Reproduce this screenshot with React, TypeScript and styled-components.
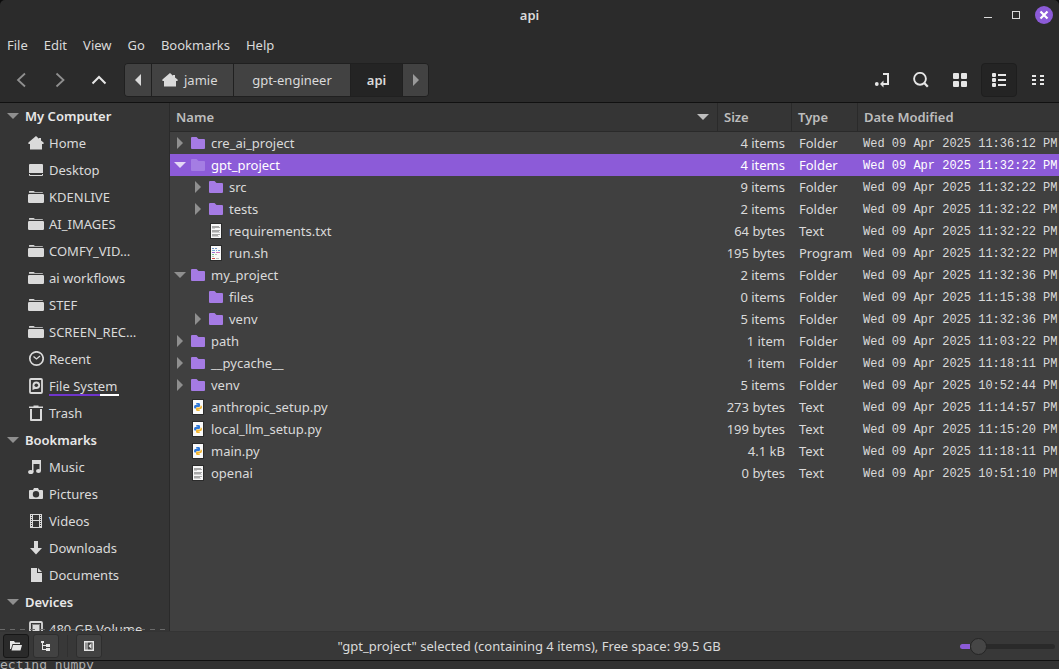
import React from "react";
import styled, { createGlobalStyle, css } from "styled-components";

const c = {
  chrome: "#2b2b2b",
  panel: "#353535",
  list: "#404040",
  edge: "#111111",
  line: "#2a2a2a",
  text: "#dadada",
  icon: "#e6e6e6",
  dim: "#8f8f8f",
  accent: "#8c5bd8",
  folder: "#a57be4",
};

const GlobalStyle = createGlobalStyle`
  *, *::before, *::after { box-sizing: border-box; }
  body {
    margin: 0;
    background: #0c0c0c;
    color: ${c.text};
    font: 13px/18px "Noto Sans", "Open Sans", sans-serif;
  }
  button { font: inherit; color: inherit; background: none; border: 0; padding: 0; margin: 0; }
  a { color: inherit; text-decoration: none; }
  svg { display: block; flex: none; }
`;

const Screen = styled.div`
  display: flex;
  flex-direction: column;
  height: 100vh;
  overflow: hidden;
`;

const Window = styled.div`
  flex: 1;
  min-height: 0;
  display: flex;
  flex-direction: column;
  border-radius: 5px 5px 0 0;
  overflow: hidden;
  border-bottom: 1px solid ${c.edge};
  background: ${c.chrome};
`;

const TitleBar = styled.header`
  display: grid;
  grid-template-columns: 1fr auto 1fr;
  align-items: center;
  height: 30px;
  padding: 0 1px;
`;

const Title = styled.h1`
  grid-column: 2;
  margin: 0;
  font-size: 13px;
  font-weight: 600;
`;

const WindowButtons = styled.div`
  display: flex;
  justify-content: flex-end;
`;

const WindowButton = styled.button`
  display: grid;
  place-items: center;
  width: 28px;
  height: 30px;
`;

const MenuBar = styled.nav`
  display: flex;
  gap: 16px;
  padding: 0 7px;
  height: 30px;
  align-items: center;
`;

const MenuItem = styled.button`
  height: 24px;
`;

const Toolbar = styled.div`
  display: flex;
  align-items: center;
  gap: 3px;
  height: 43px;
  padding: 2px 3px 4px;
  border-bottom: 1px solid ${c.edge};
`;

const ToolButton = styled.button<{ $active?: boolean; $dim?: boolean }>`
  display: grid;
  place-items: center;
  width: 36px;
  height: 34px;
  border-radius: 4px;
  border: 1px solid transparent;
  color: ${(p) => (p.$dim ? c.dim : c.icon)};
  ${(p) =>
    p.$active &&
    css`
      background: #242424;
      border-color: #1e1e1e;
    `}
`;

const PathBar = styled.div`
  display: flex;
  margin: 0 auto 0 4px;
  height: 34px;
  border: 1px solid #202020;
  border-radius: 4px;
  overflow: hidden;
`;

const PathButton = styled.button<{ $width: number; $current?: boolean; $dim?: boolean }>`
  display: flex;
  align-items: center;
  justify-content: center;
  gap: 6px;
  min-width: ${(p) => p.$width}px;
  background: ${(p) => (p.$current ? "#242424" : "#424242")};
  color: ${(p) => (p.$dim ? "#9a9a9a" : c.text)};
  font-weight: ${(p) => (p.$current ? 600 : 400)};
  & + & { border-left: 1px solid #202020; }
`;

const HomeButton = styled(PathButton)`
  justify-content: flex-start;
  padding-left: 10px;
`;

const Main = styled.div`
  flex: 1;
  min-height: 0;
  display: flex;
`;

const Sidebar = styled.nav`
  width: 170px;
  flex: none;
  position: relative;
  overflow: hidden;
  background: ${c.panel};
  border-right: 1px solid ${c.line};
`;

const Places = styled.div`
  margin-top: -1px;
`;

const OverflowEdge = styled.div`
  position: absolute;
  left: 0;
  right: 0;
  bottom: 1px;
  height: 1px;
  background: repeating-linear-gradient(90deg, #6a6a6a 0 5px, transparent 5px 10px);
`;

const GroupHeading = styled.button`
  display: flex;
  align-items: center;
  gap: 6px;
  width: 100%;
  height: 27px;
  padding-left: 7px;
  font-weight: 600;
  color: #e8e8e8;
`;

const Place = styled.a`
  display: flex;
  align-items: center;
  gap: 5px;
  height: 27px;
  padding: 0 28px;
  color: ${c.text};
  white-space: nowrap;
`;

const PlaceName = styled.span<{ $usage?: boolean }>`
  min-width: 0;
  ${(p) =>
    p.$usage &&
    css`
      margin-top: 2px;
      padding-right: 2px;
      border-bottom: 2px solid;
      border-image: linear-gradient(90deg, #6f35cc 72%, #ffffff 72%) 1;
      line-height: 16px;
    `}
`;

const Listing = styled.main`
  flex: 1;
  min-width: 0;
  overflow: hidden;
  background: ${c.list};
`;

const Files = styled.table`
  width: 100%;
  table-layout: fixed;
  border-collapse: separate;
  border-spacing: 0;
`;

const Col = styled.col<{ $width?: number }>`
  ${(p) => p.$width && `width: ${p.$width}px;`}
`;

const HeadCell = styled.th`
  height: 29px;
  padding: 0 6px;
  text-align: left;
  font-weight: 600;
  color: #bdbdbd;
  background: ${c.panel};
  border-bottom: 1px solid ${c.line};
  & + & { border-left: 1px solid ${c.line}; }
`;

const HeadButton = styled.button`
  display: flex;
  align-items: center;
  justify-content: space-between;
  width: 100%;
  padding-right: 2px;
  font-weight: 600;
`;

const Row = styled.tr<{ $selected?: boolean }>`
  ${(p) =>
    p.$selected &&
    css`
      background: ${c.accent};
      color: #ffffff;
    `}
`;

const Cell = styled.td<{ $right?: boolean }>`
  height: 22px;
  padding: 0 6px 0 8px;
  text-align: ${(p) => (p.$right ? "right" : "left")};
  white-space: nowrap;
`;

const DateCell = styled(Cell)`
  padding: 2px 0 0 6px;
  font: 12px/18px "Liberation Mono", monospace;
`;

const NameCell = styled(Cell)`
  padding: 0;
`;

const Entry = styled.div<{ $level: number }>`
  display: flex;
  align-items: center;
  padding-left: ${(p) => 3 + p.$level * 18}px;
`;

const Expander = styled.button<{ $selected?: boolean }>`
  display: grid;
  place-items: center;
  width: 14px;
  height: 22px;
  margin-right: 3px;
  color: ${(p) => (p.$selected ? "#e4d8f6" : c.dim)};
`;

const EntryName = styled.span`
  margin-left: 5px;
`;

const StatusBar = styled.footer`
  display: grid;
  grid-template-columns: 1fr auto 1fr;
  align-items: center;
  height: 29px;
  padding: 0 4px 0 3px;
  background: #383838;
  border-top: 1px solid #343434;
`;

const StatusGroup = styled.div`
  display: flex;
  align-items: center;
  gap: 4px;
`;

const StatusButton = styled.button<{ $active?: boolean }>`
  display: grid;
  place-items: center;
  width: 26px;
  height: 24px;
  border: 1px solid ${(p) => (p.$active ? "#161616" : "#2e2e2e")};
  border-radius: 3px;
  background: ${(p) => (p.$active ? "#2a2a2a" : "#424242")};
  color: ${c.icon};
`;

const Divider = styled.span`
  width: 1px;
  height: 22px;
  margin: 0 4px;
  background: #303030;
`;

const Zoom = styled.input`
  appearance: none;
  justify-self: end;
  width: 95px;
  height: 18px;
  margin: 0;
  background: transparent;
  &::-webkit-slider-runnable-track {
    height: 5px;
    border-radius: 3px;
    background: linear-gradient(90deg, ${c.accent} 10px, #2a2a2a 10px);
  }
  &::-webkit-slider-thumb {
    appearance: none;
    width: 17px;
    height: 17px;
    margin-top: -6px;
    border-radius: 50%;
    border: 1px solid #252525;
    background: #464646;
  }
`;

const Backdrop = styled.pre`
  flex: none;
  height: 8px;
  margin: 0;
  overflow: hidden;
  background: #323232;
  color: #b0b0b0;
  font: 13px/8px "DejaVu Sans Mono", monospace;
`;

const Svg = ({ size = 16, crisp, children }: { size?: number; crisp?: boolean; children: React.ReactNode }) => (
  <svg
    width={size}
    height={size}
    viewBox={`0 0 ${size} ${size}`}
    fill="currentColor"
    shapeRendering={crisp ? "crispEdges" : undefined}
    aria-hidden="true"
  >
    {children}
  </svg>
);

const Down = () => (
  <svg width="12" height="6" viewBox="0 0 12 6" fill="currentColor" aria-hidden="true">
    <path d="M0 0h12L6 6z" />
  </svg>
);

const Right = ({ flip }: { flip?: boolean }) => (
  <svg width="6" height="12" viewBox="0 0 6 12" fill="currentColor" aria-hidden="true">
    <path d={flip ? "M6 0v12L0 6z" : "M0 0v12l6-6z"} />
  </svg>
);

const icons: Record<string, React.ReactNode> = {
  home: (
    <Svg>
      <path d="M8 1 .4 7.6V9H2v5.500h12V9h1.600V7.600L13 5.400V3h-2v.8z" />
    </Svg>
  ),
  desktop: (
    <Svg>
      <path d="M1 3a1 1 0 0 1 1-1h12a1 1 0 0 1 1 1v8H1z" />
      <path d="M1 12h1v1h12v-1h1v1a1 1 0 0 1-1 1H2a1 1 0 0 1-1-1z" />
    </Svg>
  ),
  folder: (
    <Svg>
      <path d="M1 3.5V2.6Q1 2 1.6 2h4L7 3h7.4q.6 0 .6.8H1z" />
      <path d="M1.2 5h13.6q1.2 0 1.2 1.2v6.6q0 1.2-1.2 1.2H1.2Q0 14 0 12.800V6.200Q0 5 1.200 5z" />
    </Svg>
  ),
  recent: (
    <Svg>
      <circle cx="8.500" cy="7.500" r="6.700" fill="none" stroke="currentColor" strokeWidth="1.700" />
      <path d="M5.500 5.500 8.500 8l3.500-3" fill="none" stroke="currentColor" strokeWidth="1.300" />
    </Svg>
  ),
  disk: (
    <Svg>
      <rect x="2" y="1" width="12" height="14" rx="1" fill="none" stroke="currentColor" strokeWidth="1.800" />
      <path d="M4.500 12V7.200A3.800 3.800 0 1 1 8.300 11H7z" />
      <circle cx="8.300" cy="7.200" r="1.800" fill={c.panel} />
    </Svg>
  ),
  trash: (
    <Svg>
      <path d="M1 1.500h4.500v-1h5v1H15V3H1z" />
      <path d="M3 4v11h10V4" fill="none" stroke="currentColor" strokeWidth="2" strokeLinejoin="round" />
    </Svg>
  ),
  music: (
    <Svg>
      <path d="M4 1h9v11h-1.500V5H5.500v8H4z" />
      <ellipse cx="2.800" cy="13" rx="2.700" ry="2.100" />
      <ellipse cx="10.500" cy="12" rx="2.500" ry="2.100" />
    </Svg>
  ),
  camera: (
    <Svg>
      <path fillRule="evenodd" d="M2 4h3l1-2h4l1 2h3q1 0 1 1v7q0 1-1 1H2q-1 0-1-1V5q0-1 1-1zm6 1a3.200 3.200 0 1 0 0 6.400A3.200 3.200 0 0 0 8 5z" />
    </Svg>
  ),
  film: (
    <Svg crisp>
      <path fillRule="evenodd" d="M2 1h12v14H2zM5 2v5h6V2zM5 8v6h6V8zM3 2v1h1V2zM3 4v1h1V4zM3 6v1h1V6zM3 8v1h1V8zM3 10v1h1v-1zM3 12v1h1v-1zM12 2v1h1V2zM12 4v1h1V4zM12 6v1h1V6zM12 8v1h1V8zM12 10v1h1v-1zM12 12v1h1v-1z" />
    </Svg>
  ),
  download: (
    <Svg>
      <path d="M6 1h4v7h4l-6 6.500L2 8h4z" />
    </Svg>
  ),
  document: (
    <Svg>
      <path d="M3 1h6v5h5v9H3z" />
      <path d="M10 1l4 4h-4z" />
    </Svg>
  ),
  volume: (
    <Svg>
      <rect x="2" y="1" width="12" height="14" rx="1" fill="none" stroke="currentColor" strokeWidth="1.800" />
      <rect x="5" y="4" width="6" height="8" />
      <path d="M4.500 3.500h7v9h-7z" fill="none" stroke="currentColor" strokeDasharray="1 1" />
    </Svg>
  ),
};

const FolderIcon = ({ faded }: { faded?: boolean }) => (
  <Svg>
    <path d="M1 3q0-1 1-1h4.500l2 2H14q1 0 1 1v8q0 1-1 1H2q-1 0-1-1z" fill={faded ? "#a47de3" : c.folder} />
  </Svg>
);

const Sheet = ({ children }: { children: React.ReactNode }) => (
  <Svg crisp>
    <rect x="2" y="0" width="12" height="16" fill="#2b2b2b" />
    <rect x="3" y="1" width="10" height="14" fill="#f8f8f8" />
    {children}
  </Svg>
);

const fileIcons: Record<string, React.ReactNode> = {
  text: (
    <Sheet>
      <path d="M4 3h7v1H4zM4 4h8v1H4zM4 7h8v1H4zM4 8h7v1H4zM4 11h8v1H4zM4 12h6v1H4z" fill="#a8a8a8" />
      <path d="M4 5h3v1H4zM4 9h8v1H4zM4 13h7v1H4z" fill="#cfcfcf" />
    </Sheet>
  ),
  script: (
    <Sheet>
      <path d="M4 3h2v1H4zM7 3h2v1H7z" fill="#6f93c4" />
      <path d="M4 5h3v1H4zM8 5h1v1H8zM10 5h2v1h-2z" fill="#74a8d8" />
      <path d="M4 7h3v1H4z" fill="#9a6fd0" />
      <path d="M8 7h4v1H8z" fill="#d078b8" />
      <path d="M4 9h2v1H4z" fill="#6fc08a" />
      <path d="M7 9h2v1H7zM4 11h2v1H4z" fill="#b9c4b9" />
      <path d="M4 13h3v1H4z" fill="#d04848" />
      <path d="M8 13h3v1H8z" fill="#bdbdbd" />
    </Sheet>
  ),
  python: (
    <Svg>
      <path d="M2 0h12v16H2z" fill="#2b2b2b" />
      <path d="M3 1h10v14H3z" fill="#fafafa" />
      <path d="M6 5q0-1 1-1h1.500q1.500 0 1.500 1.300V7q0 1-1 1H7Q6 8 6 9.500H5q-1 0-1-1.500t1-2h2.500v-.5H6z" fill="#2f78d8" />
      <path d="M10.500 6.500h.5q1 0 1 1.500t-1 2H8.500v.5H10v.5q0 1-1 1H7.500Q6 12 6 10.800V9.500q0-1 1-1h2.500q1 0 1-1z" fill="#f2b632" />
    </Svg>
  ),
};

const groups = [
  {
    title: "My Computer",
    places: [
      ["Home", "home"],
      ["Desktop", "desktop"],
      ["KDENLIVE", "folder"],
      ["AI_IMAGES", "folder"],
      ["COMFY_VID…", "folder"],
      ["ai workflows", "folder"],
      ["STEF", "folder"],
      ["SCREEN_REC…", "folder"],
      ["Recent", "recent"],
      ["File System", "disk"],
      ["Trash", "trash"],
    ],
  },
  {
    title: "Bookmarks",
    places: [
      ["Music", "music"],
      ["Pictures", "camera"],
      ["Videos", "film"],
      ["Downloads", "download"],
      ["Documents", "document"],
    ],
  },
  { title: "Devices", places: [["480 GB Volume", "volume"]] },
];

type FileRow = {
  name: string;
  kind: "folder" | "text" | "script" | "python";
  size: string;
  type: string;
  time: string;
  level?: number;
  open?: boolean;
  leaf?: boolean;
  selected?: boolean;
};

const files: FileRow[] = [
  { name: "cre_ai_project", kind: "folder", size: "4 items", type: "Folder", time: "11:36:12" },
  { name: "gpt_project", kind: "folder", size: "4 items", type: "Folder", time: "11:32:22", open: true, selected: true },
  { name: "src", kind: "folder", size: "9 items", type: "Folder", time: "11:32:22", level: 1 },
  { name: "tests", kind: "folder", size: "2 items", type: "Folder", time: "11:32:22", level: 1 },
  { name: "requirements.txt", kind: "text", size: "64 bytes", type: "Text", time: "11:32:22", level: 1, leaf: true },
  { name: "run.sh", kind: "script", size: "195 bytes", type: "Program", time: "11:32:22", level: 1, leaf: true },
  { name: "my_project", kind: "folder", size: "2 items", type: "Folder", time: "11:32:36", open: true },
  { name: "files", kind: "folder", size: "0 items", type: "Folder", time: "11:15:38", level: 1, leaf: true },
  { name: "venv", kind: "folder", size: "5 items", type: "Folder", time: "11:32:36", level: 1 },
  { name: "path", kind: "folder", size: "1 item", type: "Folder", time: "11:03:22" },
  { name: "__pycache__", kind: "folder", size: "1 item", type: "Folder", time: "11:18:11" },
  { name: "venv", kind: "folder", size: "5 items", type: "Folder", time: "10:52:44" },
  { name: "anthropic_setup.py", kind: "python", size: "273 bytes", type: "Text", time: "11:14:57", leaf: true },
  { name: "local_llm_setup.py", kind: "python", size: "199 bytes", type: "Text", time: "11:15:20", leaf: true },
  { name: "main.py", kind: "python", size: "4.1 kB", type: "Text", time: "11:18:11", leaf: true },
  { name: "openai", kind: "text", size: "0 bytes", type: "Text", time: "10:51:10", leaf: true },
];

export default function App() {
  return (
    <Screen>
      <GlobalStyle />
      <Window>
        <TitleBar>
          <Title>api</Title>
          <WindowButtons>
            <WindowButton aria-label="Minimize">
              <Svg crisp>
                <path d="M4 10h8v1H4z" />
              </Svg>
            </WindowButton>
            <WindowButton aria-label="Maximize">
              <Svg crisp>
                <path d="M4 4h8v8H4zM5 5v6h6V5z" fillRule="evenodd" />
              </Svg>
            </WindowButton>
            <WindowButton aria-label="Close">
              <Svg size={18}>
                <circle cx="9" cy="9" r="9" fill={c.accent} />
                <path d="M5.500 5.500l7 7M12.500 5.500l-7 7" stroke="#fff" strokeWidth="2.200" />
              </Svg>
            </WindowButton>
          </WindowButtons>
        </TitleBar>
        <MenuBar aria-label="Menu">
          {["File", "Edit", "View", "Go", "Bookmarks", "Help"].map((m) => (
            <MenuItem key={m}>{m}</MenuItem>
          ))}
        </MenuBar>
        <Toolbar>
          <ToolButton $dim aria-label="Back">
            <Svg>
              <path d="M12 1.500 5 8l7 6.500" fill="none" stroke="currentColor" strokeWidth="1.800" />
            </Svg>
          </ToolButton>
          <ToolButton $dim aria-label="Forward">
            <Svg>
              <path d="M4.500 1.500 11.500 8l-7 6.500" fill="none" stroke="currentColor" strokeWidth="1.800" />
            </Svg>
          </ToolButton>
          <ToolButton aria-label="Up">
            <Svg>
              <path d="M1.500 11.500 8 5l6.500 6.500" fill="none" stroke="currentColor" strokeWidth="2" />
            </Svg>
          </ToolButton>
          <PathBar>
            <PathButton $width={26} aria-label="Scroll path left">
              <Right flip />
            </PathButton>
            <HomeButton $width={82}>
              {icons.home}
              jamie
            </HomeButton>
            <PathButton $width={117}>gpt-engineer</PathButton>
            <PathButton $width={52} $current>
              api
            </PathButton>
            <PathButton $width={26} $dim aria-label="Scroll path right">
              <Right />
            </PathButton>
          </PathBar>
          <ToolButton aria-label="Toggle location entry">
            <Svg>
              <circle cx="2.800" cy="12" r="1.900" />
              <path d="M9 2h5v10H9" fill="none" stroke="currentColor" strokeWidth="2" />
              <path d="M6 12 9.500 8.500v7z" />
            </Svg>
          </ToolButton>
          <ToolButton aria-label="Search">
            <Svg>
              <circle cx="7" cy="6.800" r="5.900" fill="none" stroke="currentColor" strokeWidth="1.900" />
              <path d="M11.300 11l3.500 3.800" stroke="currentColor" strokeWidth="2.200" />
            </Svg>
          </ToolButton>
          <ToolButton aria-label="Icon view">
            <Svg>
              <rect x="1" y="1" width="6" height="6" rx="1" />
              <rect x="9" y="1" width="6" height="6" rx="1" />
              <rect x="1" y="9" width="6" height="6" rx="1" />
              <rect x="9" y="9" width="6" height="6" rx="1" />
            </Svg>
          </ToolButton>
          <ToolButton $active aria-label="List view">
            <Svg>
              <rect x="1" y="1" width="4" height="4" rx="1" />
              <rect x="1" y="6" width="4" height="4" rx="1" />
              <rect x="1" y="11" width="4" height="4" rx="1" />
              <path d="M7 2h8v2H7zM7 7h8v2H7zM7 12h8v2H7z" />
            </Svg>
          </ToolButton>
          <ToolButton aria-label="Compact view">
            <Svg crisp>
              <path d="M2 3h4v2H2zM10 3h4v2h-4zM2 7h4v2H2zM10 7h4v2h-4zM2 11h4v2H2zM10 11h4v2h-4z" />
            </Svg>
          </ToolButton>
        </Toolbar>
        <Main>
          <Sidebar aria-label="Places">
            <Places>
              {groups.map((g) => (
                <React.Fragment key={g.title}>
                  <GroupHeading>
                    <Svg size={12}>
                      <path d="M0 3h12L6 9z" fill={c.dim} />
                    </Svg>
                    {g.title}
                  </GroupHeading>
                  {g.places.map(([name, icon]) => (
                    <Place key={name} href="#">
                      {icons[icon]}
                      <PlaceName $usage={name === "File System"}>{name}</PlaceName>
                    </Place>
                  ))}
                </React.Fragment>
              ))}
            </Places>
            <OverflowEdge />
          </Sidebar>
          <Listing>
            <Files>
              <colgroup>
                <Col />
                <Col $width={74} />
                <Col $width={66} />
                <Col $width={202} />
              </colgroup>
              <thead>
                <tr>
                  <HeadCell>
                    <HeadButton>
                      Name
                      <Down />
                    </HeadButton>
                  </HeadCell>
                  <HeadCell>Size</HeadCell>
                  <HeadCell>Type</HeadCell>
                  <HeadCell>Date Modified</HeadCell>
                </tr>
              </thead>
              <tbody>
                {files.map((f, i) => (
                  <Row key={i} $selected={f.selected}>
                    <NameCell>
                      <Entry $level={f.level ?? 0}>
                        <Expander as={f.leaf ? "span" : "button"} $selected={f.selected} aria-label={f.leaf ? undefined : "Expand"}>
                          {!f.leaf && (f.open ? <Down /> : <Right />)}
                        </Expander>
                        {f.kind === "folder" ? <FolderIcon faded={f.selected} /> : fileIcons[f.kind]}
                        <EntryName>{f.name}</EntryName>
                      </Entry>
                    </NameCell>
                    <Cell $right>{f.size}</Cell>
                    <Cell>{f.type}</Cell>
                    <DateCell>Wed 09 Apr 2025 {f.time} PM</DateCell>
                  </Row>
                ))}
              </tbody>
            </Files>
          </Listing>
        </Main>
        <StatusBar>
          <StatusGroup>
            <StatusButton $active aria-label="Show places">
              <Svg size={12}>
                <path d="M0 1h4l1 1.500h5V4H2.500L1 9H0zM3 5h9l-1.500 5.500h-9z" />
              </Svg>
            </StatusButton>
            <StatusButton aria-label="Show tree">
              <Svg size={12} crisp>
                <path d="M1 1h3v2H1zM2 3h1v7H2zM3 5h3v1H3zM3 9h3v1H3zM6 4h4v3H6zM6 8h4v3H6z" />
              </Svg>
            </StatusButton>
            <Divider />
            <StatusButton aria-label="Hide sidebar">
              <Svg size={12}>
                <path d="M1 1h10v10H1zM2.500 2.500v7h1v-7zM4.500 2.500v7h5v-7z" fillRule="evenodd" />
                <path d="M8.500 3v6l-3-3z" />
              </Svg>
            </StatusButton>
          </StatusGroup>
          <span>"gpt_project" selected (containing 4 items), Free space: 99.5 GB</span>
          <Zoom type="range" min={0} max={100} defaultValue={13} aria-label="Zoom" />
        </StatusBar>
      </Window>
      <Backdrop>ecting numpy</Backdrop>
    </Screen>
  );
}
